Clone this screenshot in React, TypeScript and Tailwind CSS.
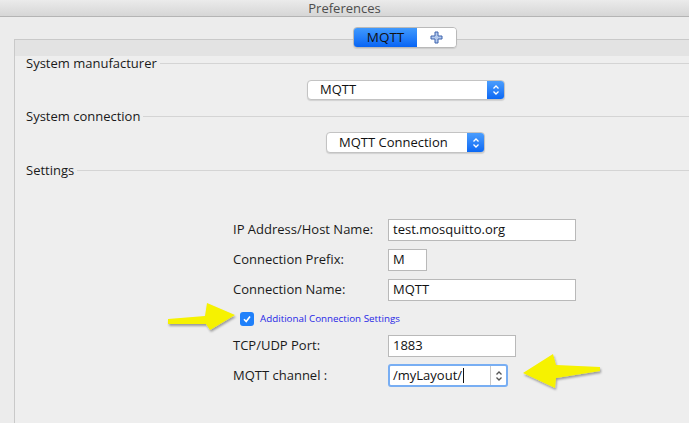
import React from "react";

function Stepper({ blue }: { blue?: boolean }) {
  const color = blue ? "#ffffff" : "#555555";
  return (
    <svg width="8" height="12" viewBox="0 0 8 12">
      <path d="M1.5 4.5 L4 2 L6.5 4.5" fill="none" stroke={color} strokeWidth="1.3" />
      <path d="M1.5 7.5 L4 10 L6.5 7.5" fill="none" stroke={color} strokeWidth="1.3" />
    </svg>
  );
}

function PopUp({ label, width, ml, h }: { label: string; width: string; ml: string; h: string }) {
  return (
    <div className={`flex ${ml} ${width} ${h} rounded-[4px] border border-[#c3c3c3] bg-white shadow-[0_1px_1px_rgba(0,0,0,0.12)] overflow-hidden`}>
      <div className="flex-1 flex items-center pl-[12px] text-[13px] text-[#111]">{label}</div>
      <div className="w-[17px] flex items-center justify-center bg-gradient-to-b from-[#4a9dfd] to-[#0a68f4]">
        <Stepper blue />
      </div>
    </div>
  );
}

function Group({ title, className }: { title: string; className?: string }) {
  return (
    <div className={`flex items-center h-[14px] ${className ?? ""}`}>
      <span className="text-[13px] leading-[14px] text-[#1a1a1a] pr-[3px]">{title}</span>
      <div className="flex-1 h-px bg-[#d4d4d4]" />
    </div>
  );
}

function Field({ label, value, width, className }: { label: string; value: string; width: string; className?: string }) {
  return (
    <div className={`flex items-center h-[22px] ${className ?? ""}`}>
      <span className="w-[155px] text-[13px] text-[#1a1a1a]">{label}</span>
      <div className={`${width} h-[22px] bg-white border border-[#b9b9b9] flex items-center pl-[4px] text-[13px] text-[#111]`}>
        {value}
      </div>
    </div>
  );
}

export default function App() {
  return (
    <div className="relative w-[689px] h-[423px] overflow-hidden bg-[#ececec] font-['Open_Sans','DejaVu_Sans',sans-serif]">
      {/* Title bar */}
      <div className="h-[17px] border-b border-[#b4b4b4] bg-gradient-to-b from-[#ebebeb] to-[#d6d6d6] flex items-center justify-center text-[13px] leading-none text-[#4d4d4d]">
        Preferences
      </div>

      {/* Tab selector */}
      <div className="relative z-10 mt-[10px] ml-[353px] flex h-[21px] w-[104px] rounded-[4px] overflow-hidden border border-[#b9b9b9] shadow-[0_1px_1px_rgba(0,0,0,0.1)]">
        <div className="w-[63px] flex items-center justify-center bg-gradient-to-b from-[#3f99fd] to-[#0764f4] text-[13.5px] text-[#111]">
          MQTT
        </div>
        <div className="flex-1 flex items-center justify-center bg-white">
          <svg width="13" height="13" viewBox="0 0 13 13">
            <path d="M5 1 H8 V5 H12 V8 H8 V12 H5 V8 H1 V5 H5 Z" fill="#b5cbee" stroke="#3d62ad" strokeWidth="1" />
          </svg>
        </div>
      </div>

      {/* Tab view */}
      <div className="-mt-[9px] ml-[14px] h-[400px] border-t border-l border-[#c9c9c9] bg-[#eeeeee]">
        <div className="h-[16px] bg-[#e3e3e3]" />
        <div className="pl-[11px]">
          <Group title="System manufacturer" />
          <PopUp label="MQTT" width="w-[198px]" ml="ml-[281px] mt-[10px]" h="h-[20px]" />
          <Group title="System connection" className="mt-[9px]" />
          <PopUp label="MQTT Connection" width="w-[159px]" ml="ml-[300px] mt-[9px]" h="h-[21px]" />
          <Group title="Settings" className="mt-[10px]" />

          <div className="ml-[207px] mt-[42px] flex flex-col">
            <Field label="IP Address/Host Name:" value="test.mosquitto.org" width="w-[188px]" />
            <Field label="Connection Prefix:" value="M" width="w-[39px]" className="mt-[8px]" />
            <Field label="Connection Name:" value="MQTT" width="w-[188px]" className="mt-[8px]" />

            <div className="flex items-center mt-[11px] ml-[7px] h-[14px]">
              <div className="w-[14px] h-[14px] rounded-[3px] bg-[#1f80fa] flex items-center justify-center">
                <svg width="10" height="10" viewBox="0 0 10 10">
                  <path d="M2 5.2 L4.2 7.5 L8 2.5" fill="none" stroke="#fff" strokeWidth="1.6" />
                </svg>
              </div>
              <span className="ml-[6px] text-[9.8px] text-[#2626e6]">Additional Connection Settings</span>
            </div>

            <Field label="TCP/UDP Port:" value="1883" width="w-[128px]" className="mt-[9px]" />

            <div className="flex items-center h-[23px] mt-[7px]">
              <span className="w-[155px] text-[13px] text-[#1a1a1a]">MQTT channel :</span>
              <div className="w-[120px] h-[23px] flex rounded-[3px] border-2 border-[#78aef3] bg-white">
                <div className="flex-1 flex items-center pl-[3px] text-[13px] text-[#111]">
                  /myLayout/
                  <span className="ml-[1px] w-px h-[15px] bg-[#111]" />
                </div>
                <div className="w-[16px] border-l border-[#c8c8c8] flex items-center justify-center">
                  <Stepper />
                </div>
              </div>
            </div>
          </div>
        </div>
      </div>

      {/* Annotation arrows */}
      <svg className="absolute left-0 top-0 pointer-events-none" width="689" height="423" viewBox="0 0 689 423">
        <defs>
          <filter id="sh" x="-20%" y="-20%" width="140%" height="160%">
            <feDropShadow dx="1" dy="2" stdDeviation="1.2" floodColor="#000" floodOpacity="0.35" />
          </filter>
        </defs>
        <path
          d="M168 319 L205 316 L207 303 L235 315 L210 330 L206 324 L168 324 Z"
          fill="#f6f200"
          filter="url(#sh)"
        />
        <path
          d="M600 367 L556 365 L553 354 L523 373 L555 388 L556 378 L600 371 Z"
          fill="#f6f200"
          filter="url(#sh)"
        />
      </svg>
    </div>
  );
}
